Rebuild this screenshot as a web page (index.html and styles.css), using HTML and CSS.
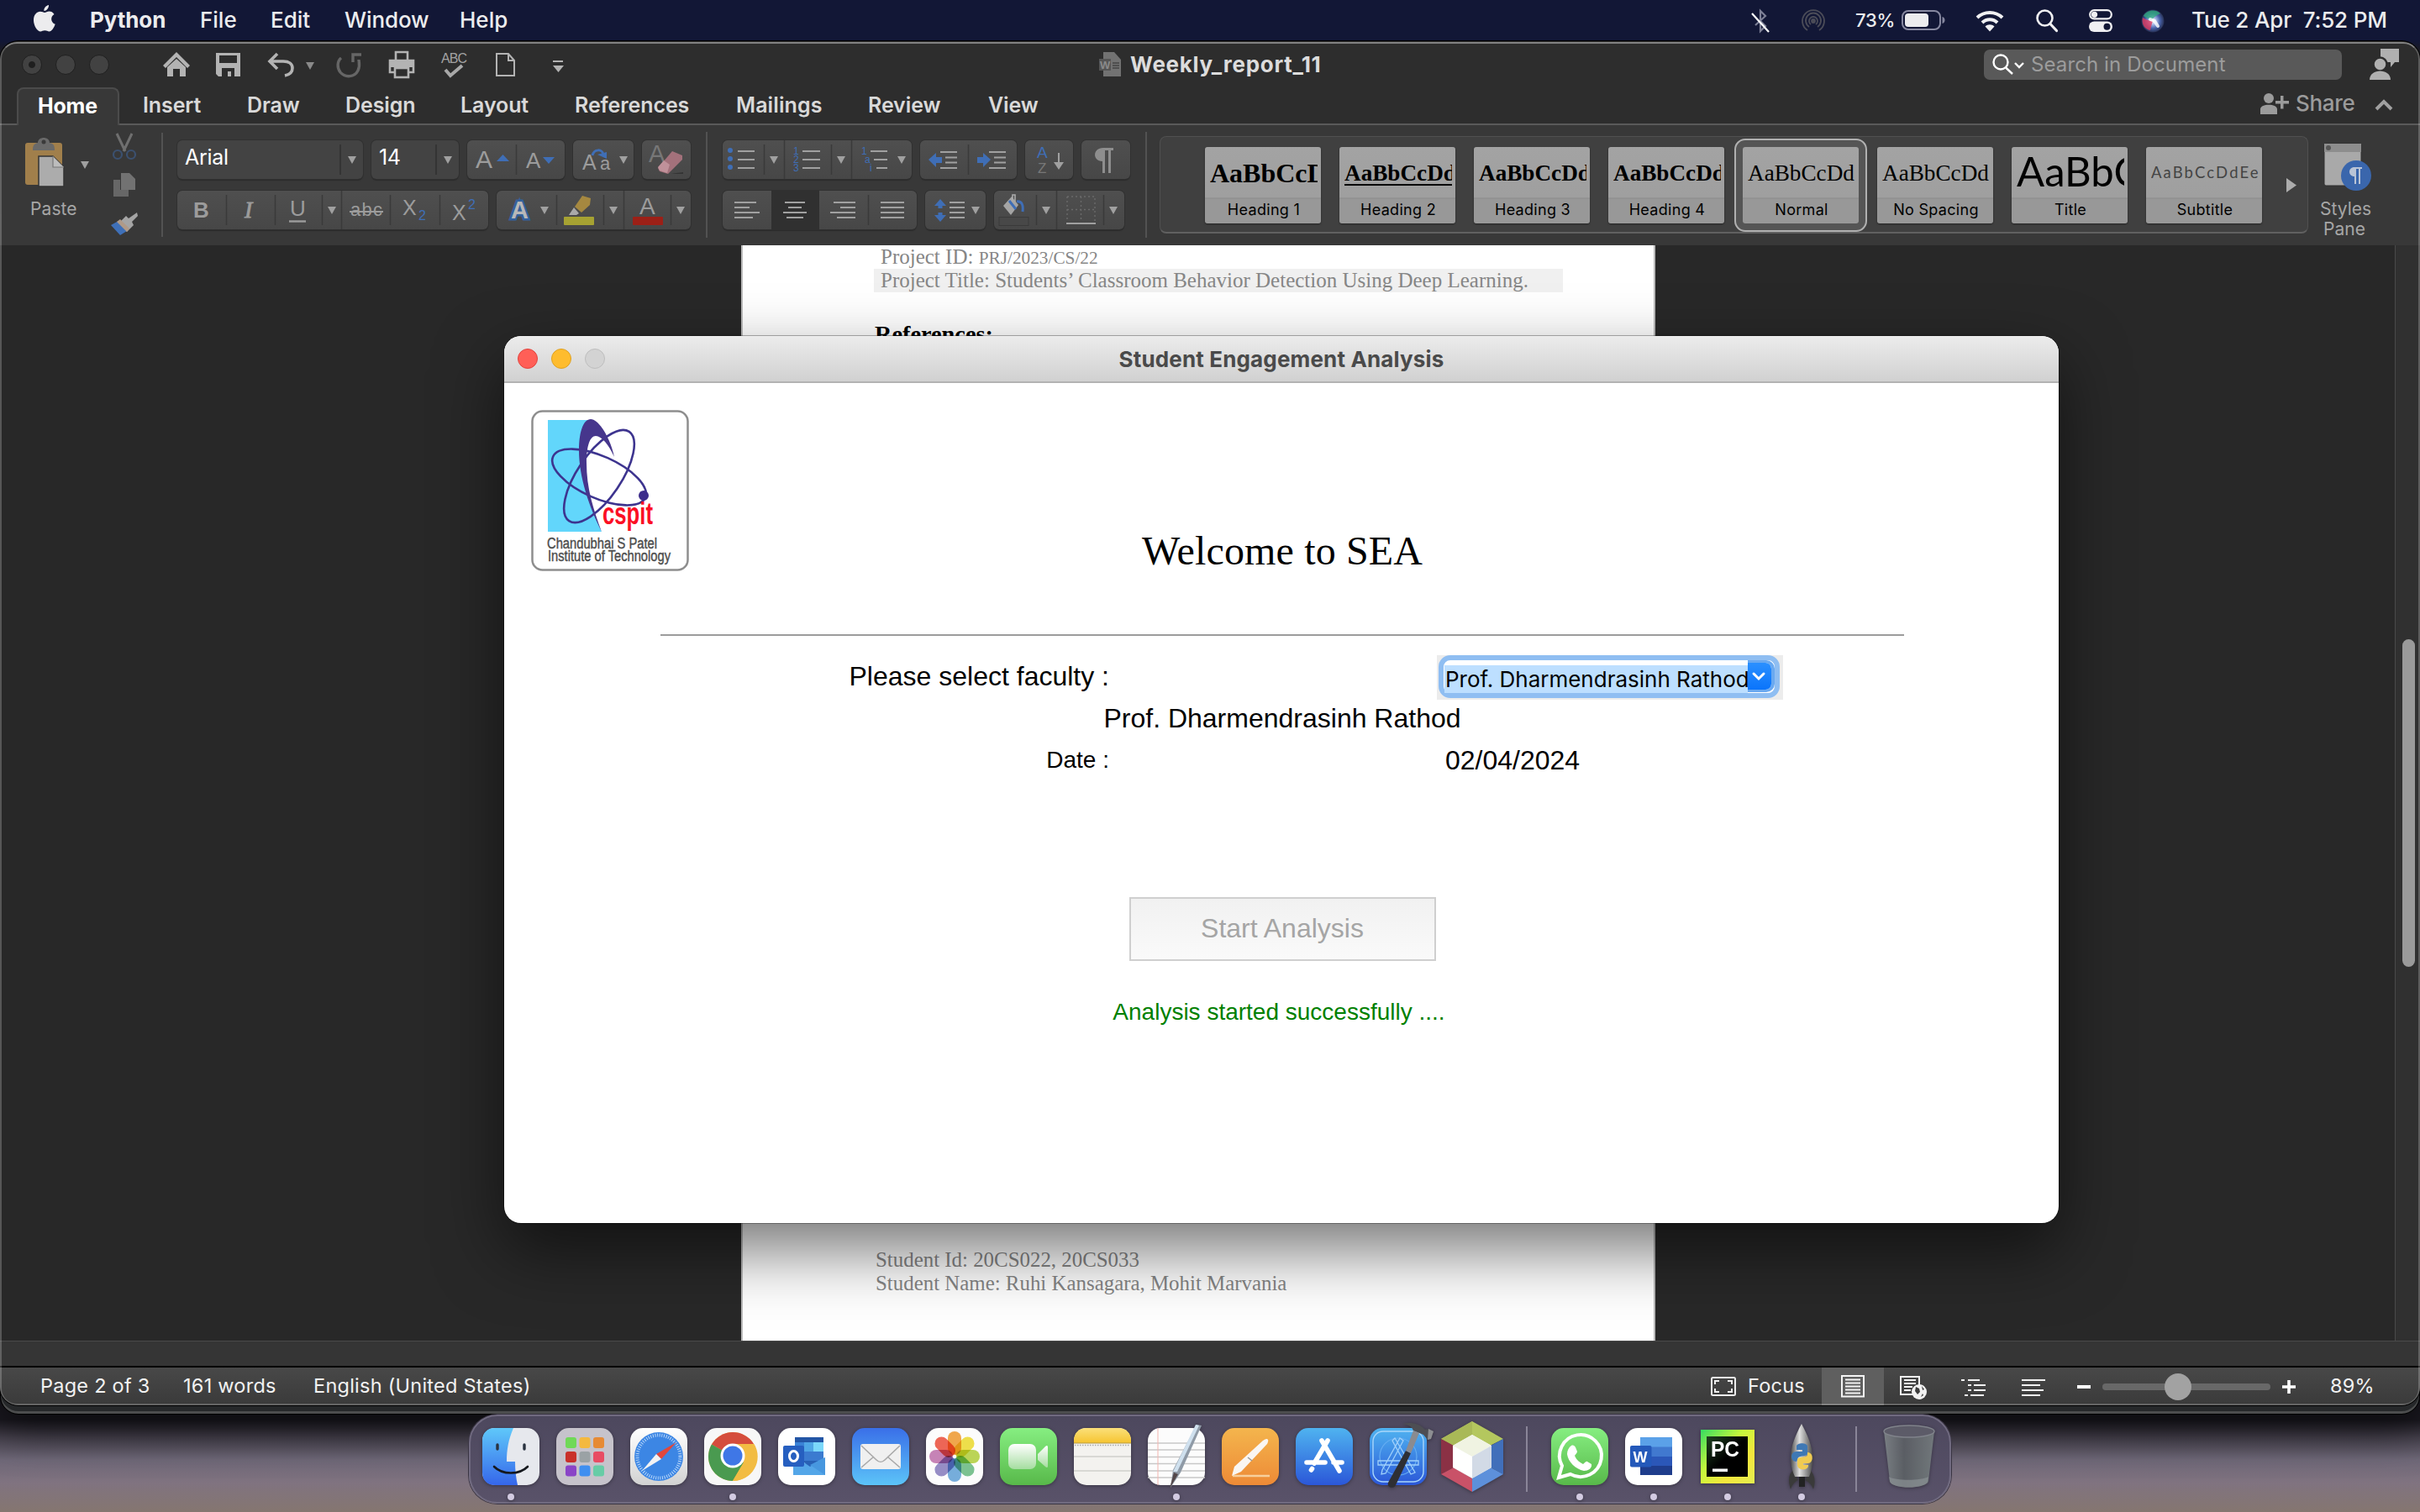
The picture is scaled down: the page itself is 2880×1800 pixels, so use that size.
FILE: index.html
```html
<!DOCTYPE html>
<html lang="en">
<head>
<meta charset="utf-8">
<title>Student Engagement Analysis</title>
<link rel="stylesheet" href="styles.css">
</head>
<body>
<svg width="0" height="0" class="defs">
  <defs>
    <symbol id="caret" viewBox="0 0 10 9"><path d="M0 0h10L5 9z" fill="#a0a0a0"/></symbol>
    <linearGradient id="gBlue" x1="0" y1="0" x2="0" y2="1"><stop offset="0" stop-color="#4fb3f0"/><stop offset="1" stop-color="#2b57d8"/></linearGradient>
    <linearGradient id="gMail" x1="0" y1="0" x2="0" y2="1"><stop offset="0" stop-color="#3a6fe8"/><stop offset="1" stop-color="#5cc4f8"/></linearGradient>
    <linearGradient id="gGreen" x1="0" y1="0" x2="0" y2="1"><stop offset="0" stop-color="#86ee81"/><stop offset="1" stop-color="#58b94a"/></linearGradient>
    <linearGradient id="gOrange" x1="0" y1="0" x2="0" y2="1"><stop offset="0" stop-color="#f4b54d"/><stop offset="1" stop-color="#ed8a36"/></linearGradient>
    <linearGradient id="gWhite" x1="0" y1="0" x2="0" y2="1"><stop offset="0" stop-color="#ffffff"/><stop offset="1" stop-color="#d2d2d2"/></linearGradient>
    <linearGradient id="gCam" x1="0" y1="0" x2="0" y2="1"><stop offset="0" stop-color="#ffffff"/><stop offset="1" stop-color="#a5dda0"/></linearGradient>
    <linearGradient id="gFinder" x1="0" y1="0" x2="0" y2="1"><stop offset="0" stop-color="#5fc8fa"/><stop offset="1" stop-color="#3566ea"/></linearGradient>
    <linearGradient id="gYellow" x1="0" y1="0" x2="0" y2="1"><stop offset="0" stop-color="#fbe07a"/><stop offset="1" stop-color="#f6c430"/></linearGradient>
    <linearGradient id="gPc" x1="0" y1="0" x2="1" y2="1"><stop offset="0" stop-color="#35dc62"/><stop offset=".4" stop-color="#c6f83c"/><stop offset=".7" stop-color="#f5e63c"/><stop offset="1" stop-color="#e3ee50"/></linearGradient>
    <linearGradient id="gPcIn" x1="0" y1="0" x2="1" y2="1"><stop offset="0" stop-color="#1f4420"/><stop offset=".5" stop-color="#000"/></linearGradient>
    <linearGradient id="gRocket" x1="0" y1="0" x2="1" y2="0"><stop offset="0" stop-color="#4c4c4c"/><stop offset=".4" stop-color="#e0e0e0"/><stop offset="1" stop-color="#4a4a4a"/></linearGradient>
    <linearGradient id="gTrash" x1="0" y1="0" x2="1" y2="0"><stop offset="0" stop-color="#7c8286"/><stop offset=".4" stop-color="#5c6066"/><stop offset="1" stop-color="#747b7e"/></linearGradient>
    <radialGradient id="gSiri"><stop offset="0" stop-color="#fff"/><stop offset=".3" stop-color="#a9b9e6"/><stop offset=".65" stop-color="#4761a8"/><stop offset="1" stop-color="#273054"/></radialGradient>
  </defs>
</svg>

<nav class="menubar">
  <svg class="apple" width="26" height="32" viewBox="0 0 26 32"><path fill="#ececee" d="M18 0c.3 3.600-2.600 7-5.600 7C12 3.700 14.800.6 18 0zM13 9c1.600 0 3-1.400 5.600-1.400 2.200 0 4.500 1.200 5.900 3.300-5 3-4.200 9.800 1.200 11.900C24.300 27 21.500 31.500 18.600 31.500c-2 0-2.800-1.200-5.200-1.200-2.500 0-3.400 1.200-5.200 1.200C4.500 31.500 0 24.500 0 18 0 11.500 4 7.800 7.800 7.800 10.200 7.800 12 9 13 9z"/></svg>
  <span class="app">Python</span><span class="m-file">File</span><span class="m-edit">Edit</span><span class="m-window">Window</span><span class="m-help">Help</span>
  <div class="tray">
    <svg width="22" height="28" viewBox="0 0 22 28"><path d="M5 19l12-11-6-6v24l6-6L11 14" fill="none" stroke="#7d8096" stroke-width="2.200"/><path d="M1 5l20 22" stroke="#fff" stroke-width="2.200"/></svg>
    <svg class="airdrop" width="28" height="28" viewBox="0 0 28 28" fill="none" stroke="#4b4c58" stroke-width="1.800"><path d="M7 25a13 13 0 1 1 14 0M9 21a9 9 0 1 1 10 0M11 18a5 5 0 1 1 6 0"/><circle cx="14" cy="14" r="2" fill="#4b4c58"/></svg>
    <span class="pct">73%</span>
    <svg width="52" height="25" viewBox="0 0 52 25"><rect x="1" y="1" width="45" height="22" rx="7" fill="none" stroke="#8688a0" stroke-width="2"/><rect x="4" y="4" width="28" height="16" rx="4" fill="#ececee"/><path d="M48.500 8c4 1 4 7 0 8z" fill="#8688a0"/></svg>
    <svg class="wifi" width="34" height="26" viewBox="0 0 34 26" fill="none" stroke="#f0f0f2" stroke-width="4"><path d="M2 9c8.500-8 21.500-8 30 0M8 15c5-5 13-5 18 0"/><path d="M11.500 19.500c3-3 8-3 11 0L17 25.500z" fill="#f0f0f2" stroke="none"/></svg>
    <svg class="mag" width="26" height="27" viewBox="0 0 26 27" fill="none" stroke="#f0f0f2" stroke-width="2.600"><circle cx="10.500" cy="10.500" r="9"/><path d="M17 17.500l7.500 8" stroke-width="3.200" stroke-linecap="round"/></svg>
    <svg class="cc" width="28" height="27" viewBox="0 0 28 27"><rect x="1.200" y="1.200" width="25.600" height="10.200" rx="5.100" fill="none" stroke="#f0f0f2" stroke-width="2.200"/><circle cx="6.500" cy="6.300" r="3.600" fill="#f0f0f2"/><rect y="14.500" width="28" height="12.500" rx="6.200" fill="#f0f0f2"/><circle cx="21.500" cy="20.700" r="4" fill="#121736"/></svg>
    <svg class="siri" width="28" height="28" viewBox="0 0 28 28"><circle cx="14" cy="14" r="13.500" fill="url(#gSiri)"/><path d="M3 8c3-7 14-9 20-3-4 2-8 4-10 8-3-1-7-3-10-5z" fill="#2fae7c" opacity=".75"/><path d="M2 10c-2 8 3 14 9 15 1-5 2-8 3-11-4 0-9-2-12-4z" fill="#e0395f" opacity=".8"/><path d="M11 12l5 2 4 6" stroke="#fff" stroke-width="4" opacity=".8" stroke-linecap="round" fill="none"/></svg>
    <span class="clock">Tue 2 Apr&nbsp; 7:52 PM</span>
  </div>
</nav>

<section class="backwin"></section>
<section class="word">
  <header class="titlebar">
    <div class="lights"><i class="dot"></i><i></i><i></i></div>
    <svg class="quick" width="480" height="36" viewBox="192 58 480 36">
      <g fill="#b3b3b3"><path d="M194 77l16-16 16 16-3 3-13-13-13 13z"/><path d="M199 79l11-10 11 10v11h-7v-9h-8v9h-7z"/>
      <path fill-rule="evenodd" d="M257 62h29v28h-26l-3-3zM261 65v9h21v-9zM264 80v10h15V80z"/><rect x="271" y="84" width="4" height="6"/>
      <path d="M364 73h10l-5 9z" fill="#8a8a8a"/><path d="M658 71h12v2h-12zM658 77h13l-6.500 8z"/></g>
      <g fill="none" stroke="#b3b3b3" stroke-width="3.600"><path d="M330 63l-9 9 9 9M322 72h15c7 0 11 3 11 8s-4 8-9 9"/></g>
      <path d="M406 68c-5 4-5 12-1 17 6 7 17 6 21-2 3-6 1-10 1-13M420 73V64h10" fill="none" stroke="#666" stroke-width="3.400"/>
      <g fill="none" stroke="#b3b3b3" stroke-width="2.600"><path d="M471 70v-9h14v9M470 85h-6V71h28v14h-6"/><rect x="470" y="80" width="16" height="11"/></g><path d="M464 71h28v8h-28z" fill="#b3b3b3"/>
      <text x="525" y="74" font-size="16" textLength="31" fill="#a3a3a3" font-family="Inter">ABC</text><path d="M530 82l6 7 14-12" fill="none" stroke="#a8a8a8" stroke-width="4"/>
      <path d="M591 63h14l7 8v18h-21zM605 63v8h7" fill="none" stroke="#b3b3b3" stroke-width="2"/>
    </svg>
    <div class="doctitle"><svg width="26" height="30" viewBox="0 0 26 30"><path d="M5 0h13l8 9v20H5z" fill="#727272"/><rect y="8" width="14" height="14" fill="#555"/><text x="1" y="20" font-size="13" font-weight="700" font-family="Inter" fill="#8a8a8a">W</text><path d="M16 13h8M16 16h8M16 19h8" stroke="#444" stroke-width="1.400"/></svg><b>Weekly_report_11</b></div>
    <div class="search"><svg width="38" height="25" viewBox="0 0 38 25" fill="none" stroke="#fff" stroke-width="2.400"><circle cx="10" cy="10" r="8.500"/><path d="M16 16.500l8 7.500M27 11l5 5 5-5"/></svg><span>Search in Document</span></div>
    <svg class="person" width="36" height="38" viewBox="0 0 36 38" fill="#b0b0b0"><path d="M13 0h22v16h-5l-5 6v-6H13z"/><circle cx="12.500" cy="18.500" r="8" stroke="#2d2d2d" stroke-width="2.500"/><path d="M0 37c0-14 25-14 25 0z"/></svg>
  </header>
  <div class="tabs">
    <span class="on">Home</span><span>Insert</span><span>Draw</span><span>Design</span><span>Layout</span><span>References</span><span>Mailings</span><span>Review</span><span>View</span>
    <div class="share"><svg width="34" height="25" viewBox="0 0 34 25" fill="#9b9b9b"><circle cx="10" cy="6" r="6"/><path d="M0 25V19c0-7 20-7 20 0v6zM18 9h6V3h3.500v6H34v3.500h-6.500v6H24v-6h-6z"/></svg><span>Share</span><svg class="up" width="22" height="14" viewBox="0 0 22 14"><path d="M2 12l9-9 9 9" fill="none" stroke="#a0a0a0" stroke-width="4"/></svg></div>
  </div>

  <div class="ribbon">
    <div class="paste">
      <svg width="172" height="134" viewBox="20 152 172 134">
        <rect x="30" y="170" width="44" height="50" rx="3" fill="#a17f4b"/><path d="M39 179c0-8 3-8 6-9 0-8 14-8 14 0 4 1 6 2 6 9z" fill="#6a6a6a"/><circle cx="52" cy="169" r="2.500" fill="#3a3a3a"/>
        <path d="M46 186h17l13 13v23H46z" fill="#acacac" stroke="#333" stroke-width="1.500"/><path d="M63 186v13h13" fill="#bdbdbd" stroke="#777" stroke-width="1.200"/>
        <path d="M96 192h10l-5 9z" fill="#a0a0a0"/>
        <path d="M139 159l10 21M157 159l-10 21" stroke="#6f6f6f" stroke-width="3"/><circle cx="140" cy="184" r="5" fill="none" stroke="#3b506f" stroke-width="2.200"/><circle cx="156" cy="184" r="5" fill="none" stroke="#3b506f" stroke-width="2.200"/>
        <path d="M144 206h10l7 7v13h-17z" fill="#727272"/><path d="M135 214h8v12h10v8h-18z" fill="#676767"/>
        <path d="M163 253l-10 7-3-3-9 9 10 10 8-8-2-4 7-7z" fill="#a5a5a5"/><path d="M141 263l-9 5 11 12 8-5z" fill="#3f70b8"/><path d="M139 264l12 12 3-4-11-11z" fill="#b09a88"/>
      </svg>
      <span>Paste</span>
    </div>
    <div class="fonts">
      <div class="row">
        <div class="box field f1"><span>Arial</span><i><svg width="10" height="9"><use href="#caret"/></svg></i></div>
        <div class="box field f2"><span>14</span><i><svg width="10" height="9"><use href="#caret"/></svg></i></div>
        <svg class="box" width="116" height="46" viewBox="557 167 116 46"><path d="M615.500 172v36" class="dv"/><text x="567" y="200" font-size="30" class="gl">A</text><text x="627" y="200" font-size="26" class="gl">A</text><path d="M592 192h15l-7.500-8zM647 187h14l-7 8z" fill="#3f6eb6"/></svg>
        <svg class="box" width="72" height="46" viewBox="683 167 72 46"><text x="694" y="202" font-size="25" class="gl">A</text><text x="715" y="202" font-size="22" class="gl">a</text><path d="M706 185c2-8 12-8 13-1" fill="none" stroke="#3f6eb6" stroke-width="3"/><path d="M712 184l11-3v8z" fill="#3f6eb6"/><path d="M738 186h10l-5 9z" fill="#a0a0a0"/></svg>
        <svg class="box" width="58" height="46" viewBox="766 167 58 46"><text x="774" y="193" font-size="29" fill="#777">A</text><path d="M800 207h15v-2z" fill="#333"/><path d="M785 200l17-20 12 5v5l-17 17-10-3z" fill="#a3717b"/><path d="M785 199l7-8 7 5-3 10-9-3z" fill="#c0919a"/></svg>
      </div>
      <div class="row">
        <svg class="box" width="370" height="46" viewBox="211 227 370 46"><path d="M269.500 232v36M327.500 232v36M383.500 232v36M464.500 232v36M523.500 232v36M406.500 227v46" class="dv"/>
          <text x="230" y="259" font-size="26" font-weight="700" class="gl">B</text><text x="291" y="259" font-size="28" font-style="italic" class="gl sf">I</text><text x="345" y="257" font-size="26" class="gl">U</text><path d="M344 263.500h20" stroke="#9c9c9c" stroke-width="2.400"/><path d="M390 246h10l-5 9z" fill="#a0a0a0"/>
          <text x="417" y="257" font-size="22" textLength="38" class="gl">abc</text><path d="M416 252h40" stroke="#9c9c9c" stroke-width="2"/>
          <text x="479" y="256" font-size="25" class="gl">X</text><text x="498" y="262" font-size="16" fill="#3f6eb6">2</text><text x="538" y="262" font-size="25" class="gl">X</text><text x="557" y="249" font-size="16" fill="#3f6eb6">2</text></svg>
        <svg class="box" width="231" height="46" viewBox="592 227 231 46"><path d="M663.500 232v36M719.500 232v36M799.500 232v36M743.500 227v46" class="dv"/>
          <text x="609" y="260" font-size="29" font-weight="600" fill="#b8b8b8" stroke="#2c68b8" stroke-width="5" stroke-opacity=".75" paint-order="stroke">A</text><path d="M644 246h10l-5 9z" fill="#a0a0a0"/><path d="M726 246h10l-5 9z" fill="#a0a0a0"/><path d="M806 246h10l-5 9z" fill="#a0a0a0"/>
          <rect x="672" y="258" width="36" height="10" rx="1" fill="#a6a232"/><path d="M685 246l9-13 10 3-1 8-10 9z" fill="#a58840"/><path d="M678 256l6-9 6 7-3 2z" fill="#a9a9a9"/><rect x="754" y="258" width="36" height="10" rx="1" fill="#9c2017"/><text x="762" y="255" font-size="28" class="gl">A</text></svg>
      </div>
    </div>
    <div class="para">
      <div class="row">
        <svg class="box" width="225" height="46" viewBox="860 167 225 46"><path d="M909.500 172v36M989.500 172v36M933.500 167v46M1013.500 167v46" class="dv"/><g fill="#3f6eb6"><circle cx="869" cy="179" r="3"/><circle cx="869" cy="189" r="3"/><circle cx="869" cy="199" r="3"/></g>
          <path d="M878 180h20M878 190h20M878 200h20M955 180h21M955 190h21M955 200h21M1036 180h20M1040 190h16M1043 200h13" class="ln"/>
          <g fill="#3f6eb6" font-size="12"><text x="944" y="184">1</text><text x="944" y="194">2</text><text x="944" y="204">3</text><text x="1025" y="184">1</text><text x="1029" y="194">a</text><text x="1035" y="204">i</text></g>
          <path d="M916 186h10l-5 9zM996 186h10l-5 9zM1068 186h10l-5 9z" fill="#a0a0a0"/></svg>
        <svg class="box" width="115" height="46" viewBox="1096 167 115 46"><path d="M1153.500 172v36" class="dv"/><path d="M1120 181h20M1126 187.500h14M1126 193.500h14M1120 200h20M1178 181h20M1184 187.500h14M1184 193.500h14M1178 200h20" class="ln"/><path d="M1106 190l9-8v5h7v7h-7v5zM1180 190l-9-8v5h-7v7h7v5z" fill="#3f6eb6"/></svg>
        <svg class="box" width="57" height="46" viewBox="1222 167 57 46"><text x="1236" y="188" font-size="19" fill="#3f6eb6">A</text><text x="1237" y="206" font-size="17" fill="#777">Z</text><path d="M1262 182v14" class="ln" stroke-width="3"/><path d="M1256 193h12l-6 9z" fill="#a0a0a0"/></svg>
        <svg class="box" width="58" height="46" viewBox="1289 167 58 46"><path d="M1327 176v3h-3v27h-3v-27h-4v27h-3v-14c-12 0-12-16 1-16z" fill="#8e8e8e"/></svg>
      </div>
      <div class="row">
        <svg class="box" width="231" height="46" viewBox="860 227 231 46"><rect x="918" y="227" width="57" height="46" fill="#303030"/><path d="M1033.500 232v36" class="dv"/><path d="M874 241h26M874 247h18M874 253h30M874 259h22M934 241h24M938 247h16M932 253h28M936 259h20M992 241h26M1000 247h18M988 253h30M996 259h22M1048 241h28M1048 247h28M1048 253h28M1048 259h28" class="ln"/></svg>
        <svg class="box" width="72" height="46" viewBox="1101 227 72 46"><path d="M1119 237l7 8h-4.500v3h-5v-3h-4.500zM1119 264l7-8h-4.500v-3h-5v3h-4.500z" fill="#3f6eb6"/><path d="M1130 241h18M1130 247h18M1130 253h18M1130 259h18" class="ln"/><path d="M1156 246h10l-5 9z" fill="#a0a0a0"/></svg>
        <svg class="box" width="155" height="46" viewBox="1183 227 155 46"><path d="M1233.500 232v36M1313.500 232v36M1257.500 227v46" class="dv"/><path d="M1194 245l10-11 8 10-9 12z" fill="#a5a5a5"/><path d="M1205 240v-8h3v8" stroke="#aaa" fill="none" stroke-width="1.600"/><path d="M1201 239l8 10M1210 240c6-1 8 4 7 12" stroke="#3f6eb6" stroke-width="3" fill="none"/><rect x="1189" y="258.500" width="35" height="10" fill="#484848" stroke="#3a3a3a"/><path d="M1240 246h10l-5 9zM1320 246h10l-5 9z" fill="#a0a0a0"/><path d="M1270 234h33v30M1270 234v30M1286.500 234v30M1270 249.500h33" fill="none" stroke="#6a6a6a" stroke-width="1.400" stroke-dasharray="2 3"/><path d="M1269 266h35" class="ln"/></svg>
      </div>
    </div>
    <div class="gallery">
      <div class="card"><p class="h1">AaBbCcDd</p><em>Heading 1</em></div>
      <div class="card"><p class="h2">AaBbCcDd</p><em>Heading 2</em></div>
      <div class="card"><p class="h3">AaBbCcDd</p><em>Heading 3</em></div>
      <div class="card"><p class="h3">AaBbCcDd</p><em>Heading 4</em></div>
      <div class="card sel"><p class="nm">AaBbCcDd</p><em>Normal</em></div>
      <div class="card"><p class="nm">AaBbCcDd</p><em>No Spacing</em></div>
      <div class="card"><p class="tt">AaBbCc</p><em>Title</em></div>
      <div class="card"><p class="st">AaBbCcDdEe</p><em>Subtitle</em></div>
      <svg class="more" width="12" height="17"><path d="M0 0l12 8.500L0 17z" fill="#adadad"/></svg>
    </div>
    <div class="pane"><svg width="58" height="58" viewBox="0 0 58 58"><rect x="1" y="1" width="44" height="50" rx="2" fill="#a9a9a9" stroke="#303030"/><rect x="1" y="1" width="44" height="10" fill="#8d8d8d"/><circle cx="6" cy="6" r="3" fill="#555"/><circle cx="39" cy="39" r="18" fill="#3a66ac"/><path d="M46 29v2h-2v18h-2V31h-3v18h-2v-9c-8 0-8-11 0-11z" fill="#b9c4d6"/></svg><span>Styles</span><span>Pane</span></div>
  </div>

  <div class="canvas">
    <article class="page">
      <div class="top"><p class="pid">Project ID: <small>PRJ/2023/CS/22</small></p><p class="ptitle">Project Title: Students’ Classroom Behavior Detection Using Deep Learning.</p><h2>References:</h2></div>
      <div class="foot"><p>Student Id: 20CS022, 20CS033</p><p>Student Name: Ruhi Kansagara, Mohit Marvania</p></div>
    </article>
    <div class="vbar"><i></i></div>
  </div>
  <div class="hbar"></div>
  <footer class="status">
    <span class="s1">Page 2 of 3</span><span class="s2">161 words</span><span class="s3">English (United States)</span>
    <div class="sright">
      <div class="focus"><svg width="30" height="23" viewBox="0 0 30 23" fill="none" stroke="#ececec" stroke-width="2"><rect x="1" y="1" width="28" height="21" rx="1.500"/><path d="M5 9V5h5M20 5h5v4M25 14v4h-5M10 18H5v-4"/></svg><span>Focus</span></div>
      <div class="view"><svg width="28" height="27" viewBox="0 0 28 27" fill="none" stroke="#f4f4f4" stroke-width="2"><rect x="1" y="1" width="26" height="24.500"/><path d="M5 5.500h18M5 9.500h18M5 13.500h18M5 17.500h18M5 21.500h18"/></svg></div>
      <svg class="modes" width="260" height="34" viewBox="2250 1632 260 34"><g fill="none" stroke="#f2f2f2" stroke-width="2"><path d="M2276 1658h-14v-21h22v10M2266 1641h14M2266 1645h14M2266 1649h10M2266 1653h8"/><path d="M2334 1641h4M2342 1641h14M2342 1647h4M2349 1647h14M2342 1653h4M2349 1653h14M2338 1659h4M2345 1659h16M2406 1641h28M2406 1647h22M2406 1653h26M2406 1659h22"/></g><circle cx="2284" cy="1655" r="9" fill="#f2f2f2"/><path d="M2280 1649l4 2 1 4-3 3-3-4zM2287 1648l3 4-2 1zM2286 1661l2-4 1 2z" fill="#3c3c3c"/><path d="M2472 1647h16v4h-16z" fill="#fff"/></svg>
      <div class="slider"><i></i></div>
      <svg class="plus" width="16" height="16"><path d="M0 6.200h6.200V0h3.600v6.200H16v3.600H9.800V16H6.200V9.800H0z" fill="#fff"/></svg>
      <span class="zoom">89%</span>
    </div>
  </footer>
</section>

<section class="dialog">
  <header><div class="lights"><i></i><i></i><i></i></div><b>Student Engagement Analysis</b></header>
  <div class="content">
    <svg class="logo" width="188" height="192" viewBox="0 0 188 192">
      <rect x="1.500" y="1.500" width="185" height="189" rx="12" fill="#fff" stroke="#8e8e8e" stroke-width="2.500"/>
      <path d="M20 12h50l-4 50 18 83H20z" fill="#62d6fb"/>
      <path d="M67 30c-6 30 0 80 17 115L110 60 90 30z" fill="#fff"/>
      <g fill="none" stroke="#3d348f" stroke-width="2.600"><ellipse cx="81" cy="80" rx="60" ry="25" transform="rotate(24 81 80)"/><ellipse cx="81" cy="79" rx="64" ry="26" transform="rotate(-56 81 79)"/></g>
      <path d="M84 145C69 115 57 80 57 48 57 24 63 11 71 11c10 0 24 24 28 45C93 42 84 31 77 31c-7 0-11 12-11 32 0 30 8 55 18 82z" fill="#46368c"/>
      <circle cx="134" cy="102" r="6" fill="#3d2d8b"/>
      <text x="85" y="136" font-size="36" font-weight="700" textLength="60" lengthAdjust="spacingAndGlyphs" fill="#fb0f24">cspit</text>
      <g fill="#4c4c4c" stroke="#4c4c4c" stroke-width=".4" font-size="18"><text x="19" y="165" textLength="131" lengthAdjust="spacingAndGlyphs">Chandubhai S Patel</text><text x="20" y="180" textLength="146" lengthAdjust="spacingAndGlyphs">Institute of Technology</text></g>
    </svg>
    <h1>Welcome to SEA</h1>
    <hr>
    <div class="pair first"><label>Please select faculty :</label><div class="combo"><span>Prof. Dharmendrasinh Rathod</span><i><svg width="16" height="11" viewBox="0 0 16 11"><path d="M2 2l6 6 6-6" fill="none" stroke="#fff" stroke-width="3" stroke-linecap="round"/></svg></i></div></div>
    <p class="prof">Prof. Dharmendrasinh Rathod</p>
    <div class="pair second"><label>Date :</label><span>02/04/2024</span></div>
    <div class="start">Start Analysis</div>
    <p class="ok">Analysis started successfully ....</p>
  </div>
</section>

<section class="dock">
  <div class="it run"><svg viewBox="0 0 68 68"><rect width="68" height="68" rx="15" fill="#e6e8ed"/><path d="M15 0h22c-6 14-8 26-8 40h10c0 10 1 19 3 28H15C6 68 0 62 0 53V15C0 6 6 0 15 0z" fill="url(#gFinder)"/><path d="M18 20v5M50 20v5" stroke="#2a3340" stroke-width="3.400" stroke-linecap="round"/><path d="M14 46c10 10 30 10 40 0" fill="none" stroke="#15181e" stroke-width="2.600" stroke-linecap="round"/></svg></div>
  <div class="it"><svg viewBox="0 0 68 68"><rect width="68" height="68" rx="15" fill="#c6c3cb"/><rect x="11" y="11" width="13" height="13" rx="3" fill="#70d957"/><rect x="27.500" y="11" width="13" height="13" rx="3" fill="#f4b93f"/><rect x="44" y="11" width="13" height="13" rx="3" fill="#e68a35"/><rect x="11" y="28" width="13" height="13" rx="3" fill="#c9302a"/><rect x="27.500" y="28" width="13" height="13" rx="3" fill="#9ba2a5"/><rect x="44" y="28" width="13" height="13" rx="3" fill="#e84c63"/><rect x="11" y="44.500" width="13" height="13" rx="3" fill="#8a44c7"/><rect x="27.500" y="44.500" width="13" height="13" rx="3" fill="#3f8ff0"/><rect x="44" y="44.500" width="13" height="13" rx="3" fill="#67cca6"/></svg></div>
  <div class="it"><svg viewBox="0 0 68 68"><rect width="68" height="68" rx="15" fill="url(#gWhite)"/><circle cx="34" cy="34" r="29" fill="#3c86e4"/><circle cx="34" cy="34" r="25.500" fill="none" stroke="#b9d8fa" stroke-width="4" stroke-dasharray="1 1.670"/><path d="M55 17L37 37l-6-6z" fill="#e0473c"/><path d="M14 51l17-20 6 6z" fill="#f2f2f4"/></svg></div>
  <div class="it run"><svg viewBox="0 0 68 68"><rect width="68" height="68" rx="15" fill="#f7f7f7"/><circle cx="34" cy="34" r="29" fill="#f2bc43"/><path d="M34 34L9 19.500a29 29 0 0 1 50-.5z" fill="#d54d3d"/><path d="M8.900 19.500A29 29 0 0 0 34 63l13-22z" fill="#4a9a50"/><path d="M34 19h25.500A29 29 0 0 1 34 63l13-22z" fill="#f2bc43"/><circle cx="34" cy="33" r="14.500" fill="#fff"/><circle cx="34" cy="33" r="11.500" fill="#3f77e6"/></svg></div>
  <div class="it"><svg viewBox="0 0 68 68"><rect width="68" height="68" rx="15" fill="#fff"/><path d="M20 11h34v18H20z" fill="#2355a5"/><path d="M20 17h11v19H20z" fill="#3a82d6"/><path d="M31 17h11v11H31z" fill="#4fa6e6"/><path d="M42 17h12v11H42z" fill="#7bd8fa"/><path d="M31 28h23v12H31z" fill="#3b7bd0"/><path d="M18 36l20 8 18-9v21H18z" fill="#54a6e8"/><path d="M28 39h20L38 46z" fill="#2861b5"/><path d="M38 44l18-9v21z" fill="#4797df"/><rect x="6" y="21" width="25" height="25" rx="2" fill="#265fc0"/><ellipse cx="18.500" cy="33.500" rx="5" ry="6" fill="none" stroke="#fff" stroke-width="3"/></svg></div>
  <div class="it"><svg viewBox="0 0 68 68"><rect width="68" height="68" rx="15" fill="url(#gMail)"/><rect x="10" y="19" width="48" height="30" rx="3" fill="#f0f0f0"/><path d="M11 21l18 17c3 3 7 3 10 0l18-17M11 47l15-13M57 47L42 34" fill="none" stroke="#a9a9a9" stroke-width="1.600"/></svg></div>
  <div class="it"><svg viewBox="0 0 68 68"><rect width="68" height="68" rx="15" fill="#fcfcfc"/><g class="petals"><rect x="26" y="4" width="16" height="28" rx="8" fill="#f2a23e"/><rect x="26" y="4" width="16" height="28" rx="8" fill="#efdf3c" transform="rotate(45 34 34)"/><rect x="26" y="4" width="16" height="28" rx="8" fill="#b8d448" transform="rotate(90 34 34)"/><rect x="26" y="4" width="16" height="28" rx="8" fill="#72c08a" transform="rotate(135 34 34)"/><rect x="26" y="4" width="16" height="28" rx="8" fill="#6ba8dc" transform="rotate(180 34 34)"/><rect x="26" y="4" width="16" height="28" rx="8" fill="#8f85c4" transform="rotate(225 34 34)"/><rect x="26" y="4" width="16" height="28" rx="8" fill="#c57bb2" transform="rotate(270 34 34)"/><rect x="26" y="4" width="16" height="28" rx="8" fill="#ef5a48" transform="rotate(315 34 34)"/></g></svg></div>
  <div class="it"><svg viewBox="0 0 68 68"><rect width="68" height="68" rx="15" fill="url(#gGreen)"/><rect x="10" y="19" width="33" height="30" rx="7" fill="url(#gCam)"/><path d="M45 31l9-9c2-2 3-1 3 1v22c0 2-1 3-3 1l-9-8z" fill="url(#gCam)"/></svg></div>
  <div class="it"><svg viewBox="0 0 68 68"><rect width="68" height="68" rx="15" fill="#f3f2ef"/><path d="M0 18v-3C0 6 6 0 15 0h38c9 0 15 6 15 15v3z" fill="url(#gYellow)"/><path d="M0 18h68" stroke="#b59a45" stroke-width="1"/><path d="M1 20.500h66" stroke="#aaa" stroke-width="1.500" stroke-dasharray="1.500 1.500"/><path d="M0 34h68M0 51h68" stroke="#cfcfcb" stroke-width="1.400"/></svg></div>
  <div class="it run"><svg viewBox="0 0 68 68"><rect width="68" height="68" rx="15" fill="#fcfcfc"/><path d="M0 18h68M0 26h68M0 34.500h68M0 42.500h68M0 51h68M0 59h68" stroke="#c8c8c8" stroke-width="1.500"/><path d="M12 0v68" stroke="#f2b5b0" stroke-width="1"/><path d="M58-4l6 1-25 56-12 18 3-21z" fill="#8f9aa6"/><path d="M57-4l4 1-26 55-5 0z" fill="#cfe0ee"/><path d="M31 53l5 2-10 17z" fill="#54484a"/></svg></div>
  <div class="it"><svg viewBox="0 0 68 68"><rect width="68" height="68" rx="15" fill="url(#gOrange)"/><path d="M13 57h44" stroke="#f7cf9c" stroke-width="2.600"/><path d="M12 57l3-11 34-31c5-4 8-2 5 4L23 52z" fill="#faf6f2"/><path d="M31 35l5 4" stroke="#999" stroke-width="1.600"/></svg></div>
  <div class="it"><svg viewBox="0 0 68 68"><rect width="68" height="68" rx="15" fill="url(#gBlue)"/><g stroke="#fff" stroke-width="5.600" stroke-linecap="round"><path d="M38 15L22 42M31 15l21 36M13 41h22M45 41h10M18.500 50l1-1.500"/></g></svg></div>
  <div class="it"><svg viewBox="0 0 68 68"><rect width="68" height="68" rx="15" fill="url(#gBlue)"/><rect x="4" y="4" width="60" height="60" rx="12" fill="none" stroke="#a9d6fa" stroke-width="1.400"/><circle cx="34" cy="34" r="22" fill="none" stroke="#66aef2" stroke-width="1.200"/><g fill="none" stroke="#9fd0fb" stroke-width="1.300"><path d="M36 12l4 3-21 39-5 1 1-5zM30 12l-3 3 22 40 5-2zM10 39h48v5H10z"/></g><path d="M43 27l6 3-18 38c-2 5-11 3-9-3z" fill="#2e2f34"/><path d="M52 3l7 3-10 24-6-3z" fill="#8a8b90"/><path d="M39-5c9-2 20-1 27 7l4-1 6 3-3 9-4 1-5-6-12-5c-2-5-6-7-13-8z" fill="#4d4e53"/><path d="M70 1l6 3-3 9-4 1z" fill="#8d8e92"/></svg></div>
  <div class="it"><svg viewBox="0 0 68 68"><path d="M34-8L-3 13l37 19 37-19z" fill="#b4c75e"/><path d="M34-8L-3 13l14 8 23-13z" fill="#a9b957"/><path d="M-3 13v42l15-8V21z" fill="#8b3145"/><path d="M71 13v42l-15-8V21z" fill="#416fba"/><path d="M-3 55l37 21V60L12 47z" fill="#c95268"/><path d="M71 55L34 76V60l22-13z" fill="#5d90db"/><path d="M34 8L11 21v26l23 13 23-13V21z" fill="#fff"/><path d="M34 8L11 21l23 13 23-13z" fill="#f0f3e2"/><path d="M34 34l23-13v26L34 60z" fill="#d2dae6"/></svg></div>
  <i class="sep"></i>
  <div class="it run"><svg viewBox="0 0 68 68"><rect width="68" height="68" rx="15" fill="url(#gGreen)"/><path d="M9 59l4-14a25 25 0 1 1 10 10z" fill="none" stroke="#fff" stroke-width="4"/><path d="M24 21c2-1 4 0 5 2l2 5c0 2-2 3-3 5 2 5 6 8 10 10 2-1 3-4 5-3l5 3c1 5-4 8-9 8-10-2-19-11-20-20 0-4 2-8 5-10z" fill="#fff"/></svg></div>
  <div class="it run"><svg viewBox="0 0 68 68"><rect width="68" height="68" rx="15" fill="#fff"/><path d="M18 11h38v12H18z" fill="#5ba1e8"/><path d="M18 22.500h38V34H18z" fill="#4179cf"/><path d="M18 34h38v11H18z" fill="#2b57b8"/><path d="M18 45h38v11H18z" fill="#1f3d8c"/><rect x="6" y="21" width="25.500" height="25.500" rx="2" fill="#2459ba"/><text x="9.500" y="40.500" font-size="18" font-weight="700" fill="#fff" font-family="Inter">W</text></svg></div>
  <div class="it run"><svg viewBox="0 0 68 68"><path d="M2 2h64v64H2z" fill="url(#gPc)"/><path d="M9 10h49v48H9z" fill="url(#gPcIn)"/><text x="14" y="34" font-size="25" font-weight="700" textLength="34" lengthAdjust="spacingAndGlyphs" fill="#fff" font-family="Open Sans">PC</text><path d="M16 48.500h18v3.500H16z" fill="#fff"/></svg></div>
  <div class="it run"><svg viewBox="0 0 68 68"><path d="M24 50c-6 5-6 14-3 23 2-6 5-9 9-11zM44 50c6 5 7 14 4 23-2-6-6-9-10-11z" fill="#3a3a3a"/><path d="M31 56h7v14h-7z" fill="#222"/><path d="M34-5C44 14 53 34 43 58H26C15 34 24 14 34-5z" fill="url(#gRocket)"/><path d="M28 22c0-5 13-5 13 0v8c0 4-9 3-11 5l-2 5c-8 0-8-12 0-12h7v-2h-7z" fill="#3f78b4"/><path d="M41 29c8 0 7 13 1 13h-6v2h6c1 7-13 7-13 0v-6c0-5 12-2 12-6z" fill="#f0cb52"/></svg></div>
  <i class="sep s2"></i>
  <div class="it trash"><svg viewBox="0 0 68 68"><path d="M4 4l7 59c1 10 45 10 46 0L64 4z" fill="url(#gTrash)" opacity=".95"/><path d="M10 58c8 5 38 5 47 0l-1 6c-4 9-41 9-45 0z" fill="#8a9294" opacity=".7"/><ellipse cx="34" cy="4" rx="30" ry="7" fill="#5c5b68" stroke="#80838b" stroke-width="1.500"/></svg></div>
</section>
</body>
</html>
```
FILE: styles.css
```css
*, *::before, *::after { box-sizing: border-box; margin: 0; padding: 0; }
body { width: 2880px; height: 1800px; overflow: hidden; position: relative; font-family: Inter, "Liberation Sans", sans-serif; font-size: 26px;
  background: linear-gradient(#121736 0, #121736 49px, #1a1a22 60px, #1c1a22 1690px, #48434f 1712px, #6f6878 1738px, #807380 1765px, #857670 1800px); }
svg { display: block; flex: none; overflow: visible; }
.defs { position: absolute; }
i { display: block; font-style: normal; }
svg text { font-family: "Liberation Sans", sans-serif; }

/* Menu bar */
.menubar { height: 49px; display: flex; align-items: center; color: #ececee; font-weight: 500; padding-left: 40px; white-space: nowrap; }
.menubar .apple { margin: -6px 41px 0 0; }
.menubar span { margin-top: -3px; flex: none; }
.app { font-weight: 700; width: 131px; letter-spacing: -.1px; }
.m-file { width: 84px; } .m-edit { width: 88px; } .m-window { width: 137px; letter-spacing: -.1px; }
.tray { display: flex; align-items: center; position: absolute; left: 2084px; height: 49px; }
.airdrop { margin-left: 38px; }
.menubar .tray .pct { font-size: 22px; margin: -2px 0 0 36px; width: 55px; letter-spacing: -.2px; }
.wifi { margin-left: 36px; } .mag { margin-left: 38px; } .cc { margin-left: 37px; } .siri { margin-left: 34px; }
.tray .clock { margin-left: 32px; letter-spacing: -.15px; }

/* Word window */
.backwin { position: absolute; left: 0; top: 1600px; width: 2880px; height: 84px; border-radius: 0 0 22px 22px; background: #26282a; border: 1px solid #000; box-shadow: inset 0 -3px 0 #4c4d4e, 0 10px 50px 6px rgba(0,0,0,.6); }
.word { position: absolute; left: 0; top: 49px; width: 2880px; height: 1624px; border-radius: 22px; overflow: hidden; background: #2d2d2d; display: flex; flex-direction: column; box-shadow: 0 0 0 1px #000; }
.word::after { content: ""; position: absolute; inset: 1px 0 0; border: 2px solid rgba(255,255,255,.22); border-top-color: rgba(255,255,255,.4); border-radius: 20px; }
.titlebar { height: 55px; flex: none; display: flex; align-items: center; padding-left: 26px; }
.lights { display: flex; gap: 16px; }
.lights i { width: 24px; height: 24px; border-radius: 50%; background: #424242; border: 1px solid #202020; }
.lights .dot { background: radial-gradient(#1f1f1f 0 3.500px, #424242 4.500px); }
.quick { margin-left: 62px; }
.doctitle { display: flex; align-items: center; gap: 11px; margin-left: 636px; width: 1053px; color: #dcdcdc; }
.doctitle b { font-weight: 700; letter-spacing: .7px; }
.search { width: 426px; height: 36px; border-radius: 7px; background: #595959; display: flex; align-items: center; padding-left: 10px; gap: 8px; color: #9c9c9c; font-size: 24px; letter-spacing: .1px; }
.person { margin-left: 33px; }
.tabs { height: 45px; flex: none; display: flex; position: relative; color: #d9d9d9; font-weight: 600; line-height: 42px; padding-left: 20px; border-bottom: 2px solid #5a5a5a; font-size: 25px; }
.tabs > span { flex: none; letter-spacing: -.1px; }
.tabs .on { width: 122px; height: 45px; padding-left: 23px; margin-right: 28px; background: #383838; border: 2px solid #4b4b4b; border-bottom: 0; border-radius: 8px 8px 0 0; color: #fff; line-height: 40px; font-weight: 700; letter-spacing: -.2px; }
.tabs > span:nth-child(2) { width: 124px; } .tabs > span:nth-child(3) { width: 117px; } .tabs > span:nth-child(4) { width: 137px; } .tabs > span:nth-child(5) { width: 136px; }
.tabs > span:nth-child(6) { width: 192px; } .tabs > span:nth-child(7) { width: 157px; letter-spacing: .1px; } .tabs > span:nth-child(8) { width: 143px; } .tabs > span:nth-child(9) { width: 1514px; }
.share { display: flex; align-items: center; height: 38px; gap: 8px; color: #9b9b9b; font-weight: 500; font-size: 26px; }
.share span { width: 74px; letter-spacing: -.3px; }
.share .up { margin: 3px 0 0 12px; }
.ribbon { height: 143px; flex: none; display: flex; background: #383838; padding-left: 20px; }
.paste { width: 174px; border-right: 2px solid #525252; height: 124px; margin-top: 9px; position: relative; color: #a6a6a6; font-size: 21px; }
.paste svg { margin-top: -6px; }
.paste span { position: absolute; left: 16px; top: 78px; letter-spacing: .1px; }
.fonts { padding: 18px 16px 0 17px; width: 648px; border-right: 2px solid #525252; display: flex; flex-direction: column; gap: 14px; background-clip: content-box; }
.para { padding: 18px 0 0 18px; width: 523px; border-right: 2px solid #525252; display: flex; flex-direction: column; gap: 14px; }
.fonts, .para { height: 143px; border-image: linear-gradient(transparent 9px, #525252 9px, #525252 133px, transparent 133px) 1; }
.row { display: flex; gap: 10px; }
.box { background: linear-gradient(#4f4f4f, #474747); border-radius: 6px; box-shadow: 0 0 0 1px #303030, 0 2px 1px #2b2b2b; overflow: hidden; height: 46px; }
.field { display: flex; background: #434343; color: #fff; font-size: 25px; }
.field span { flex: 1; padding: 5px 0 0 9px; letter-spacing: -.3px; }
.field i { width: 28px; border-left: 2px solid #343434; margin: 5px 0; padding: 14px 0 0 8px; }
.f1 { width: 221px; } .f2 { width: 104px; }
.dv { stroke: #3a3a3a; stroke-width: 1.500px; }
.ln { stroke: #a0a0a0; stroke-width: 2px; fill: none; }
svg .gl { fill: #9c9c9c; }
svg .sf { font-family: "Liberation Serif", serif; stroke: #9c9c9c; stroke-width: .8px; }
.gallery { margin: 13px 0 0 15px; width: 1367px; height: 116px; border: 1px solid #505050; border-bottom: 2px solid #606060; border-radius: 8px; background: #404040; display: flex; padding: 12px 0 0 53px; gap: 22px; flex: none; }
.card { width: 138px; height: 91px; background: linear-gradient(#a3a3a3, #9f9f9f 60px, #8a8a8a 61px, #989898 62px); border-radius: 3px; color: #000; flex: none; text-align: center; padding: 0 4px 0 6px; box-shadow: 0 1px 2px #222; }
.card p { height: 61px; overflow: hidden; white-space: nowrap; text-align: left; font: 27.200px/62px "Liberation Serif", serif; }
.card em { font: 400 18px/27px Inter, sans-serif; letter-spacing: .3px; white-space: nowrap; display: block; }
.card .h1 { font-size: 32px; font-weight: 700; } .card .h2, .card .h3 { font-weight: 700; } .card .h2 { text-decoration: underline; text-decoration-thickness: 2px; text-underline-offset: 4px; }
.card .tt { font: 400 49px/56px Lato, sans-serif; color: #000; } .card .st { font: 400 18.500px/60px Lato, sans-serif; letter-spacing: 2.100px; color: #444; }
.sel { outline: 2px solid #b0b0b0; outline-offset: 8px; box-shadow: 0 0 0 9px #555; border-radius: 3px; }
.more { margin: 37px 0 0 7px; }
.pane { margin: 21px 0 0 18px; width: 60px; color: #a6a6a6; font-size: 21px; line-height: 24px; }
.pane svg { margin-bottom: 9px; } .pane span { display: block; width: 52px; margin-left: -4px; text-align: center; } .pane span:last-child { width: 58px; }
.pane span { width: 60px; }

.canvas { flex: 1; background: #282828; display: flex; position: relative; border-bottom: 1px solid #4a4a4a; }
.page { margin-left: 882px; width: 1088px; background: #fff; display: flex; flex-direction: column; justify-content: space-between; font-family: "Liberation Serif", serif; color: #868686; font-size: 25px; line-height: 28px; white-space: nowrap; border-left: 2px solid #bbb; border-right: 2px solid #bbb; }
.pid, .ptitle { padding-left: 8px; margin-left: 156px; width: 820px; height: 28px; }
.pid small { font-size: 21.300px; }
.ptitle { background: #f0f0f0; font-size: 25px; }
.page h2 { color: #000; font-size: 28.300px; margin: 36px 0 0 157px; }
.foot { padding: 0 0 54px 158px; font-size: 24.900px; }
.vbar { position: absolute; right: 0; top: 0; width: 30px; height: 100%; background: #303030; border-left: 1px solid #4a4a4a; }
.vbar i { width: 15px; height: 390px; margin: 469px 0 0 8px; border-radius: 8px; background: #9a9a9a; }
.hbar { height: 29px; flex: none; background: #353535; }
.status { height: 47px; flex: none; background: linear-gradient(#484848, #3a3a3a); border-top: 2px solid #000; display: flex; align-items: center; color: #f2f2f2; font-size: 23.500px; padding-left: 48px; white-space: nowrap; }
.status span { flex: none; letter-spacing: .25px; margin-top: -2px; } .s1 { width: 170px; } .s2 { width: 155px; }
.sright { margin-left: auto; display: flex; align-items: center; height: 100%; width: 844px; }
.focus { display: flex; gap: 14px; width: 132px; align-items: center; }
.view { width: 74px; height: 100%; background: #5f5f5f; display: flex; align-items: center; justify-content: center; }
.modes { margin-left: 8px; }
.slider { width: 200px; height: 8px; border-radius: 4px; background: #686868; margin-left: -8px; }
.slider i { width: 32px; height: 32px; border-radius: 50%; background: #a2a2a2; margin: -12px 0 0 74px; }
.plus { margin: 0 41px 0 14px; }

/* Python dialog */
.dialog { position: absolute; left: 600px; top: 400px; width: 1850px; height: 1056px; border-radius: 20px; background: #fff; overflow: hidden; box-shadow: 0 0 0 1px rgba(0,0,0,.3), 0 32px 80px rgba(0,0,0,.55); }
.dialog header { height: 56px; background: linear-gradient(#ececec, #d1d1d1); border-bottom: 2px solid #b3b3b3; display: flex; align-items: center; color: #4a4a4a; }
.dialog header b { flex: 1; text-align: center; margin-right: 120px; font-weight: 700; font-size: 26px; letter-spacing: .15px; }
.dialog .lights { margin-left: 16px; width: 104px; flex: none; }
.dialog .lights i { background: #ff5f57; border-color: #e0443e; } .dialog .lights i:nth-child(2) { background: #febc2e; border-color: #dea123; } .dialog .lights i:nth-child(3) { background: #d3d3d3; border-color: #bdbdbd; }
.content { font-family: "Liberation Sans", sans-serif; color: #000; font-size: 32px; height: 1000px; display: flex; flex-direction: column; align-items: center; padding-left: 2px; }
.logo { margin: 32px 0 0 30px; align-self: flex-start; }
.content h1 { font: 48px/56px "Liberation Serif", serif; margin-top: -52px; letter-spacing: .15px; }
.content hr { width: 1480px; border: 0; border-top: 2px solid #9c9c9c; margin-top: 71px; }
.pair { display: grid; grid-template-columns: 719px 1fr; width: 1850px; line-height: 40px; }
.pair label { text-align: right; }
.pair > :last-child { margin-left: 400px; }
.first { margin-top: 23px; height: 53px; } .first label { margin-top: 5px; }
.pair .combo { width: 412px; height: 53px; margin-left: 390px; background: #ececec; position: relative; }
.combo::before { content: ""; position: absolute; left: 2px; top: 0; width: 406px; height: 51px; border: 6px solid #8fbef2; border-radius: 14px; background: #fff; }
.combo span { position: absolute; left: 9px; top: 12px; width: 361px; height: 33px; padding-left: 1px; background: #bddfff; font: 400 26px/34px Inter, sans-serif; white-space: nowrap; letter-spacing: 0; }
.combo i { position: absolute; left: 370px; top: 9px; width: 28px; height: 32px; border-radius: 0 7px 7px 0; background: linear-gradient(#2b90ff, #0a74fb); box-shadow: 1px 0 0 3px #6aa9f0; clip-path: inset(-4px -5px -4px 0); padding: 11px 0 0 5px; }
.prof { line-height: 40px; margin-top: 2px; }
.second { margin-top: 10px; } .second label { font-size: 28px; }
.start { width: 365px; height: 76px; margin-top: 143px; border: 2px solid #cfcfcf; background: linear-gradient(#f1f1f1, #fafafa); color: #a5a5a5; text-align: center; line-height: 71px; }
.ok { color: #008000; font-size: 28px; line-height: 40px; margin: 41px 8px 0 0; }

/* Dock */
.dock { position: absolute; left: 558px; top: 1684px; width: 1764px; height: 106px; border-radius: 34px; background: linear-gradient(#4d485e, #595269); border: 2px solid #706a80; box-shadow: 0 0 0 1px #3a3543; display: flex; padding: 14px 0 0 14px; gap: 20px; }
.it { width: 68px; height: 68px; position: relative; flex: none; filter: drop-shadow(0 1px 2px rgba(0,0,0,.35)); }
.it svg { width: 68px; height: 68px; }
.run::after { content: ""; position: absolute; left: 30px; top: 78px; width: 8px; height: 8px; border-radius: 50%; background: #d3cbe2; }
.petals rect { mix-blend-mode: multiply; opacity: .92; }
.sep { width: 2px; height: 78px; background: #8a8598; margin: -2px 8px 0 10px; flex: none; }
.s2.sep { margin: -2px 8px 0 10px; }
```
